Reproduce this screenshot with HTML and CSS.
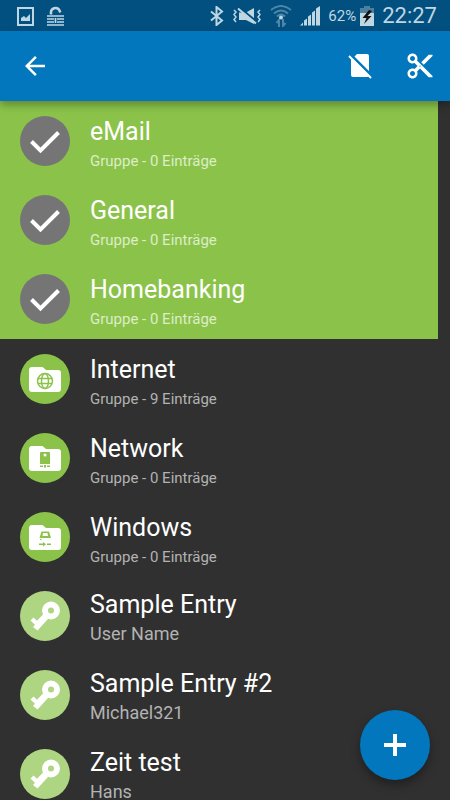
FILE: index.html
```html
<!DOCTYPE html>
<html lang="de">
<head>
  <meta charset="UTF-8" />
  <meta name="viewport" content="width=device-width, initial-scale=1" />
  <title>Gruppen</title>
  <link rel="stylesheet" href="styles.css">
</head>
<body>
  <!-- shared icons -->
  <svg class="hidden">
    <symbol id="icon-check" viewBox="0 0 50 50">
      <path d="M11.500 25.500 L20.500 34.500 L38.500 16.500" fill="none" stroke="#fff" stroke-width="4"/>
    </symbol>
    <symbol id="icon-folder" viewBox="0 0 50 50">
      <path d="M12 13h10.500l3.500 3h12a3 3 0 0 1 3 3v16a3 3 0 0 1-3 3H12a3 3 0 0 1-3-3V16a3 3 0 0 1 3-3z" fill="#fff"/>
    </symbol>
    <symbol id="icon-key" viewBox="0 0 50 50">
      <circle cx="31" cy="19.500" r="6" fill="none" stroke="#fff" stroke-width="6"/>
      <path d="M13.500 26.500 L17 29.700 L23.500 23 L28 28 L17.500 39.500 L13 36 L15 33.700 L10.500 29.500z" fill="#fff"/>
    </symbol>
  </svg>

  <div class="app">
    <div class="status-bar">
      <div class="status-group notifications">
        <svg width="17" height="20" viewBox="0 0 17 20">
          <path d="M1 2h15v17H1z" fill="none" stroke="currentColor" stroke-width="2"/>
          <path d="M4 15v-3l3-2 2 2 4-4v7z" fill="currentColor"/>
        </svg>
        <svg width="17" height="20" viewBox="0 0 17 20">
          <path d="M4 8.500V7a4.500 4.500 0 0 1 8.500-2.500l.8 2" fill="none" stroke="currentColor" stroke-width="2.500"/>
          <path d="M0 10h17M0 13h7M10 13h7M0 16h7M10 16h7M0 19h17M8.500 12v5" fill="none" stroke="currentColor" stroke-width="1.700"/>
        </svg>
      </div>
      <div class="status-group">
        <svg width="14" height="20" viewBox="0 0 14 20">
          <path d="M1 5.500l11 9-5.500 4.500V1L12 5.500l-11 9" fill="none" stroke="currentColor" stroke-width="2"/>
        </svg>
        <svg width="30" height="20" viewBox="0 0 30 20">
          <path d="M2 4l2 2-2 2.500 2 2.500-2 2.500 2 2.500M28 4l-2 2 2 2.500-2 2.500 2 2.500-2 2.500" fill="none" stroke="currentColor" stroke-width="1.500"/>
          <path d="M7 6.500h7L22 2v16l-8-4H7z" fill="currentColor"/>
          <path d="M7 1l18 15" stroke="#01507f" stroke-width="2"/>
          <path d="M6 2.500l18 15" stroke="currentColor" stroke-width="2"/>
        </svg>
        <svg width="22" height="22" viewBox="0 0 22 22">
          <g fill="none" stroke="#4d86a8" stroke-width="2">
            <path d="M1 5q10-8 20 0M4 8.500q7-6 14 0M7 11.500q4-4 8 0"/>
            <path d="M9 22v-7l-2.500 3M13 14v7l2.500-3"/>
          </g>
          <circle cx="11" cy="12.500" r="2" fill="currentColor"/>
        </svg>
        <svg width="20" height="20" viewBox="0 0 20 20">
          <path d="M0 19.500l3-3v3zM4 19.500v-5l3-2v7zM8 19.500v-9l3-2v11zM12 19.500v-13l3-2v15zM16 19.500v-17l4-2.500v19.500z" fill="currentColor"/>
        </svg>
        <span class="battery-level">62%</span>
        <svg width="14" height="20" viewBox="0 0 14 20">
          <path d="M4 0h6v2h4v6H0V2h4z" fill="#4d7f9e"/>
          <path d="M0 7h14v13H0z" fill="currentColor"/>
          <path d="M9 4L2.500 12h4L4 18l7.500-8h-4L12 5z" fill="#111"/>
        </svg>
        <span class="clock">22:27</span>
      </div>
    </div>

    <header class="toolbar">
      <button class="tool" type="button" aria-label="Zurück">
        <svg width="30" height="30" viewBox="0 0 24 24">
          <path d="M20 11H7.830l5.590-5.590L12 4l-8 8 8 8 1.410-1.410L7.830 13H20z" fill="#fff"/>
        </svg>
      </button>
      <div class="tool-actions">
        <button class="tool" type="button" aria-label="Keine Karte">
          <svg width="30" height="30" viewBox="0 0 30 30">
            <path d="M12 3h10a2 2 0 0 1 2 2v19a2 2 0 0 1-2 2H8a2 2 0 0 1-2-2V9z" fill="#fff"/>
            <path d="M5 3L28 26" stroke="#0277bd" stroke-width="2.500"/>
            <path d="M4 5l22 22" stroke="#fff" stroke-width="2"/>
          </svg>
        </button>
        <button class="tool" type="button" aria-label="Ausschneiden">
          <svg width="30" height="30" viewBox="0 0 24 24">
            <path d="M9.640 7.640c.23-.5.360-1.050.360-1.640 0-2.210-1.790-4-4-4S2 3.790 2 6s1.790 4 4 4c.59 0 1.140-.13 1.640-.36L10 12l-2.360 2.360C7.140 14.130 6.590 14 6 14c-2.210 0-4 1.790-4 4s1.790 4 4 4 4-1.790 4-4c0-.59-.13-1.140-.36-1.640L12 14l7 7h3v-1L9.640 7.640zM6 8c-1.100 0-2-.89-2-2s.9-2 2-2 2 .89 2 2-.9 2-2 2zm0 12c-1.100 0-2-.89-2-2s.9-2 2-2 2 .89 2 2-.9 2-2 2zm6-7.500c-.28 0-.5-.22-.5-.5s.22-.5.5-.5.500.22.500.5-.22.500-.5.500zM19 3l-6 6 2 2 7-7V3z" fill="#fff"/>
          </svg>
        </button>
      </div>
    </header>

    <main class="content">
      <ul class="list selected">
        <li>
          <label class="row">
            <span class="avatar"><input type="checkbox" checked><svg><use href="#icon-check"/></svg></span>
            <span class="text"><span class="title">eMail</span><span class="sub">Gruppe - 0 Einträge</span></span>
          </label>
        </li>
        <li>
          <label class="row">
            <span class="avatar"><input type="checkbox" checked><svg><use href="#icon-check"/></svg></span>
            <span class="text"><span class="title">General</span><span class="sub">Gruppe - 0 Einträge</span></span>
          </label>
        </li>
        <li>
          <label class="row">
            <span class="avatar"><input type="checkbox" checked><svg><use href="#icon-check"/></svg></span>
            <span class="text"><span class="title">Homebanking</span><span class="sub">Gruppe - 0 Einträge</span></span>
          </label>
        </li>
      </ul>

      <ul class="list">
        <li>
          <a class="row" href="#internet">
            <span class="avatar group">
              <svg viewBox="0 0 50 50">
                <use href="#icon-folder"/>
                <g fill="none" stroke="#8bc34a" stroke-width="1.500">
                  <circle cx="25" cy="27" r="7.500"/>
                  <ellipse cx="25" cy="27" rx="3.500" ry="7.500"/>
                  <path d="M18 24.500h14M18 29.500h14"/>
                </g>
              </svg>
            </span>
            <span class="text"><span class="title">Internet</span><span class="sub">Gruppe - 9 Einträge</span></span>
          </a>
        </li>
        <li>
          <a class="row" href="#network">
            <span class="avatar group">
              <svg viewBox="0 0 50 50">
                <use href="#icon-folder"/>
                <path d="M21 19h8a1 1 0 0 1 1 1v11H20V20a1 1 0 0 1 1-1zM20 32.500h3v1.500h-3zM24 32h2v2.500h-2zM27 32.500h3v1.500h-3z" fill="#8bc34a"/>
                <circle cx="25" cy="22" r="1.500" fill="#fff"/>
              </svg>
            </span>
            <span class="text"><span class="title">Network</span><span class="sub">Gruppe - 0 Einträge</span></span>
          </a>
        </li>
        <li>
          <a class="row" href="#windows">
            <span class="avatar group">
              <svg viewBox="0 0 50 50">
                <use href="#icon-folder"/>
                <path d="M21.500 19.500h7.500l2 6.500H19.500zM23 21l-.5 3h5.500l-.5-3z" fill="#8bc34a" fill-rule="evenodd"/>
                <path d="M20 27h1.500v1H20zM19 31.500h4V30l3 2.300-3 2.300V33h-4zM27 31.500h4V33h-4z" fill="#8bc34a"/>
              </svg>
            </span>
            <span class="text"><span class="title">Windows</span><span class="sub">Gruppe - 0 Einträge</span></span>
          </a>
        </li>
        <li>
          <a class="row entry" href="#sample-entry">
            <span class="avatar"><svg><use href="#icon-key"/></svg></span>
            <span class="text"><span class="title">Sample Entry</span><span class="sub">User Name</span></span>
          </a>
        </li>
        <li>
          <a class="row entry" href="#sample-entry-2">
            <span class="avatar"><svg><use href="#icon-key"/></svg></span>
            <span class="text"><span class="title">Sample Entry #2</span><span class="sub">Michael321</span></span>
          </a>
        </li>
        <li>
          <a class="row entry" href="#zeit-test">
            <span class="avatar"><svg><use href="#icon-key"/></svg></span>
            <span class="text"><span class="title">Zeit test</span><span class="sub">Hans</span></span>
          </a>
        </li>
      </ul>
    </main>

    <button class="fab" type="button" aria-label="Hinzufügen">
      <svg width="24" height="24" viewBox="0 0 24 24">
        <path d="M12 1v22M1 12h22" stroke="#fff" stroke-width="4"/>
      </svg>
    </button>
  </div>
</body>
</html>
```
FILE: styles.css
```css
* {
  box-sizing: border-box;
}
body {
  margin: 0;
  font-family: Roboto, "Noto Sans", sans-serif;
  background: #303030;
  color: #fff;
}
.hidden {
  display: none;
}
.app {
  display: flex;
  flex-direction: column;
  height: 100vh;
}

/* status bar */
.status-bar {
  flex: none;
  display: flex;
  justify-content: space-between;
  align-items: center;
  height: 31px;
  padding: 0 13px 0 17px;
  background: #01507f;
  color: #bfd6e3;
}
.status-group {
  display: flex;
  align-items: center;
  gap: 8px;
}
.notifications {
  gap: 13px;
}
.battery-level {
  font-size: 15px;
  margin-right: -4px;
}
.clock {
  font-size: 22px;
}

/* toolbar */
.toolbar {
  flex: none;
  display: flex;
  justify-content: space-between;
  align-items: center;
  height: 70px;
  padding: 0 15px 0 20px;
  background: #0277bd;
  box-shadow: 0 4px 8px rgba(0,0,0,0.3);
  z-index: 1;
}
.tool {
  display: flex;
  padding: 0;
  border: 0;
  background: none;
  cursor: pointer;
}
.tool-actions {
  display: flex;
  gap: 30px;
}

/* list */
.content {
  flex: 1;
  min-height: 0;
  overflow-y: auto;
  scrollbar-width: none;
  padding-right: 12px;
}
.list {
  list-style: none;
  margin: 0;
  padding: 0;
}
.selected {
  background: #8bc34a;
  padding-bottom: 1px;
}
.row {
  display: flex;
  align-items: flex-start;
  gap: 20px;
  height: 79px;
  padding: 15px 20px 0;
  color: #fff;
  text-decoration: none;
}
.avatar {
  flex: none;
  display: grid;
  width: 50px;
  height: 50px;
  border-radius: 50%;
  background: #757575;
}
.avatar input,
.avatar svg {
  grid-area: 1 / 1;
  width: 50px;
  height: 50px;
  margin: 0;
}
.avatar input {
  appearance: none;
}
.avatar svg {
  pointer-events: none;
}
.avatar.group {
  background: #8bc34a;
}
.text {
  display: flex;
  flex-direction: column;
  gap: 3px;
}
.title {
  font-size: 25px;
  line-height: 32px;
}
.sub {
  font-size: 15px;
  line-height: 20px;
  color: #b3b3b3;
}
.selected .sub {
  color: #dcedc8;
}
.entry .avatar {
  background: #aed581;
}
.entry .text {
  gap: 0;
  margin-top: -2px;
}
.entry .sub {
  font-size: 18px;
  line-height: 26px;
}

/* floating button */
.fab {
  position: fixed;
  right: 20px;
  bottom: 20px;
  z-index: 2;
  display: flex;
  align-items: center;
  justify-content: center;
  width: 70px;
  height: 70px;
  border: 0;
  border-radius: 50%;
  background: #0277bd;
  box-shadow: 0 5px 10px rgba(0,0,0,0.35);
  cursor: pointer;
}
```
